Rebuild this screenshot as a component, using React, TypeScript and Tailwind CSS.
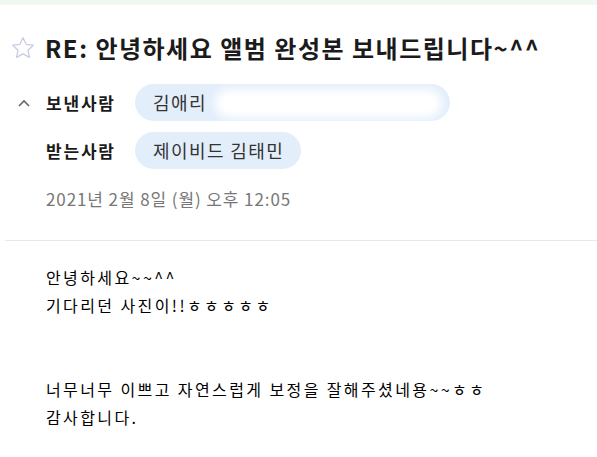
import React from 'react';

const font = { fontFamily: '"Noto Sans CJK KR", "Noto Sans", sans-serif' };

const Chip = ({ name, hidden }: { name: string; hidden?: boolean }) => (
    <div
        className={`relative h-[37px] rounded-full bg-[#e3eefb] pl-[18px] pr-[17px] flex items-center overflow-hidden ${hidden ? 'w-[315px]' : ''}`}
    >
        <span className="text-[18px] tracking-[1.4px] text-[#333]">{name}</span>
        {hidden && (
            <div className="absolute left-[80px] right-[8px] top-[5px] bottom-[3px] rounded-[18px] bg-white blur-[5px]" />
        )}
    </div>
);

const App = () => {
    return (
        <div className="w-[597px] h-[457px] bg-white overflow-hidden" style={font}>
            <div className="h-[5px] bg-[#eff9f1]" />

            <div className="flex items-center pl-[10px] pt-[25px]">
                <svg width="26" height="26" viewBox="0 0 24 24" fill="none" stroke="#c9cce2" strokeWidth="1.2" strokeLinejoin="round">
                    <path d="M12 2.5l2.9 6.1 6.6.8-4.9 4.6 1.3 6.6L12 17.4l-5.9 3.2 1.3-6.6-4.9-4.6 6.6-.8z" />
                </svg>
                <h1 className="ml-[9px] text-[24px] font-bold text-[#1b1b1b] tracking-[1.5px]">
                    RE: 안녕하세요 앨범 완성본 보내드립니다~^^
                </h1>
            </div>

            <div className="mt-[18px] flex items-center">
                <div className="w-[46px] flex justify-center pl-[2px]">
                    <svg width="14" height="10" viewBox="0 0 14 10" fill="none" stroke="#666" strokeWidth="1.6">
                        <path d="M2 8l5-5 5 5" />
                    </svg>
                </div>
                <span className="w-[89px] text-[17px] tracking-[1.8px] font-bold text-[#1b1b1b]">보낸사람</span>
                <Chip name="김애리" hidden />
            </div>

            <div className="mt-[11px] flex items-center">
                <span className="ml-[46px] w-[89px] text-[17px] tracking-[1.8px] font-bold text-[#1b1b1b]">받는사람</span>
                <Chip name="제이비드 김태민" />
            </div>

            <div className="mt-[17px] pl-[46px] text-[17px] tracking-[0.9px] text-[#777]">2021년 2월 8일 (월) 오후 12:05</div>

            <div className="mt-[28px] ml-[5px] h-px bg-[#e8e8e8]" />

            <div className="pt-[22px] pl-[46px] text-[16px] tracking-[2.4px] leading-[28px] text-black">
                <p>안녕하세요~~^^</p>
                <p>기다리던 사진이!!ㅎㅎㅎㅎㅎ</p>
                <p>&nbsp;</p>
                <p>&nbsp;</p>
                <p>너무너무 이쁘고 자연스럽게 보정을 잘해주셨네용~~ㅎㅎ</p>
                <p>감사합니다.</p>
            </div>
        </div>
    );
};

export default App;
